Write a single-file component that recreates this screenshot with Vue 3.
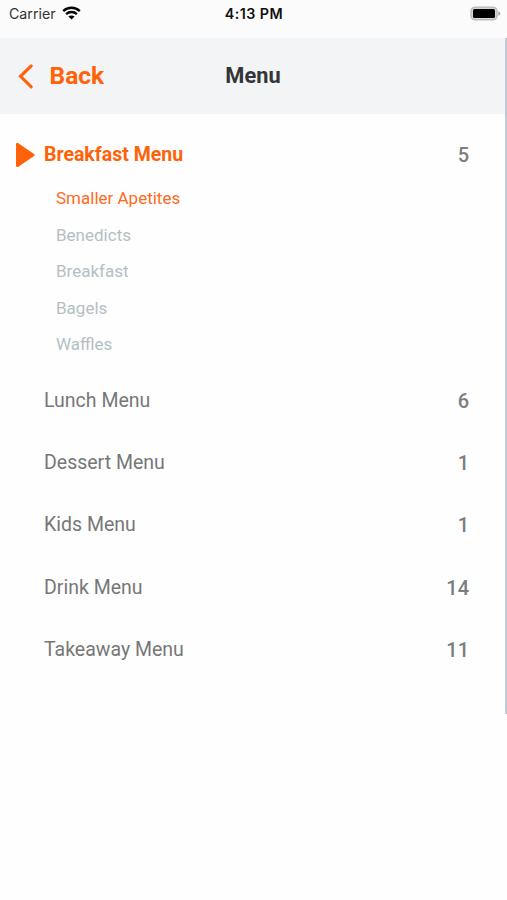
<script setup>
const subItems = ['Smaller Apetites', 'Benedicts', 'Breakfast', 'Bagels', 'Waffles']
const sections = [
  { name: 'Lunch Menu', count: 6 },
  { name: 'Dessert Menu', count: 1 },
  { name: 'Kids Menu', count: 1 },
  { name: 'Drink Menu', count: 14 },
  { name: 'Takeaway Menu', count: 11 },
]
</script>

<template>
  <div class="screen">
    <div class="status">
      <div class="carrier">
        <span>Carrier</span>
        <svg class="wifi" width="19" height="14" viewBox="0 0 19 14">
          <path d="M1.2 5.1C5.8.6 13.2.6 17.8 5.1" fill="none" stroke="#050505" stroke-width="2.4" />
          <path d="M4.1 8.1c3-2.8 7.8-2.8 10.8 0" fill="none" stroke="#050505" stroke-width="2.3" />
          <path d="M6.4 10.5c1.7-1.5 4.5-1.5 6.2 0L9.5 13.6z" fill="#050505" />
        </svg>
      </div>
      <div class="clock">4:13 PM</div>
      <div class="power">
        <svg width="31" height="16" viewBox="0 0 31 16">
          <rect x="1" y="1.2" width="26" height="12.6" rx="4" fill="#d8d8d8" stroke="#bcbcbc" stroke-width="1.5" />
          <rect x="3" y="2.9" width="22" height="9.2" rx="1.5" fill="#000" />
          <path d="M28.3 5.2c2.8.8 2.8 3.8 0 4.6z" fill="#aaa" />
        </svg>
      </div>
    </div>
    <div class="panel">
      <header class="bar">
        <button class="back">
          <svg width="16" height="26" viewBox="0 0 16 26">
            <path d="M13.2 2.8 2.5 13.3l10.7 10.5" fill="none" stroke="#ff6208" stroke-width="3.1" stroke-linecap="round" />
          </svg>
          <span>Back</span>
        </button>
        <h1 class="title">Menu</h1>
      </header>
      <main class="list">
        <div class="row active">
          <svg class="marker" width="20" height="26" viewBox="0 0 20 26">
            <path d="M2.3 2.2v21.6L18.3 13z" fill="#ff6208" stroke="#ff6208" stroke-width="2.6" stroke-linejoin="round" />
          </svg>
          <span class="name">Breakfast Menu</span>
          <span class="count">5</span>
        </div>
        <ul class="subs">
          <li v-for="(item, i) in subItems" :key="item" :class="{ selected: i === 0 }">{{ item }}</li>
        </ul>
        <div v-for="s in sections" :key="s.name" class="row">
          <span class="name">{{ s.name }}</span>
          <span class="count">{{ s.count }}</span>
        </div>
      </main>
    </div>
  </div>
</template>

<style>
body {
  background: #fefefe;
}
</style>

<style scoped>
.screen {
  height: 900px;
  overflow: hidden;
  background: #fefefe;
  font-family: Roboto, sans-serif;
}
.status {
  display: grid;
  grid-template-columns: 1fr auto 1fr;
  height: 38px;
  padding: 0 6px 11px 9px;
  box-sizing: border-box;
  align-items: center;
  background: #fbfbfb;
  color: #111;
  font-family: Inter, sans-serif;
}
.carrier {
  display: flex;
  align-items: center;
  gap: 6px;
  font-size: 14.2px;
  color: #333;
}
.wifi {
  margin-top: -1px;
}
.clock {
  margin-left: -2px;
  font-size: 14.3px;
  font-weight: 600;
  letter-spacing: 0.45px;
}
.power {
  display: flex;
  justify-content: flex-end;
}
.panel {
  height: 676px;
  box-sizing: border-box;
  border-right: 2px solid #c4cbd6;
}
.bar {
  display: grid;
  grid-template-columns: 1fr auto 1fr;
  align-items: center;
  height: 76px;
  background: #f2f4f6;
}
.back {
  display: flex;
  align-items: center;
  gap: 16px;
  padding: 0 0 0 17.5px;
  border: 0;
  background: none;
  color: #ff6208;
  font: 700 24.5px/30px Roboto, sans-serif;
}
.title {
  margin: 0;
  padding-left: 1px;
  font-size: 21.8px;
  line-height: 28px;
  font-weight: 700;
  color: #333537;
}
.list {
  padding-top: 15px;
}
.row {
  display: flex;
  align-items: center;
  height: 62.3px;
  padding: 0 36px 0 44px;
  font-size: 19.5px;
  color: #777;
}
.row.active {
  height: 50px;
  padding-left: 15px;
}
.marker {
  margin: 1px 9px 0 0;
}
.name {
  flex: 1;
}
.active .name {
  color: #ff6208;
  font-weight: 700;
}
.count {
  padding-top: 1px;
  font-size: 20px;
  font-weight: 500;
  color: #7d7d7d;
}
.subs {
  margin: 0 0 5.5px;
  padding: 1px 0 0.5px 56px;
  list-style: none;
  font-size: 17px;
  line-height: 36.6px;
  color: #b4bfc4;
}
.subs .selected {
  color: #ff6a1c;
}
</style>
